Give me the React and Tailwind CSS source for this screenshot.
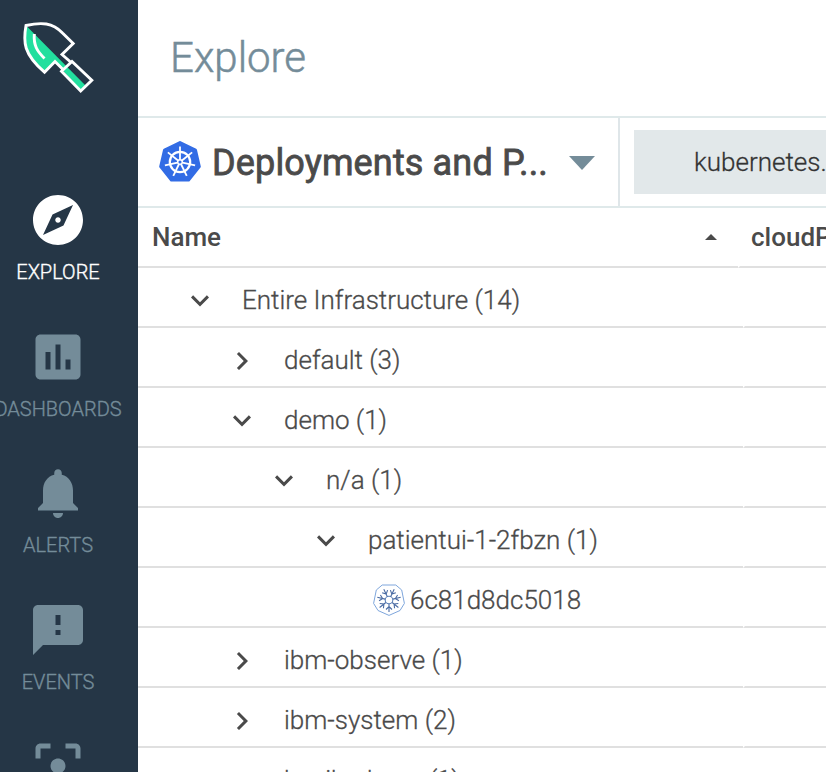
const nav = [
  {
    label: "EXPLORE",
    active: true,
    path: "M12 10.9c-.61 0-1.1.49-1.1 1.1s.49 1.1 1.1 1.1c.61 0 1.1-.49 1.1-1.1s-.49-1.1-1.1-1.1zM12 2C6.48 2 2 6.48 2 12s4.48 10 10 10 10-4.48 10-10S17.52 2 12 2zm2.19 12.19L6 18l3.81-8.19L18 6l-3.81 8.19z",
  },
  {
    label: "DASHBOARDS",
    path: "M19 3H5c-1.1 0-2 .9-2 2v14c0 1.1.9 2 2 2h14c1.1 0 2-.9 2-2V5c0-1.1-.9-2-2-2zM9 17H7v-7h2v7zm4 0h-2V7h2v10zm4 0h-2v-4h2v4z",
  },
  {
    label: "ALERTS",
    path: "M12 22c1.1 0 2-.9 2-2h-4c0 1.1.89 2 2 2zm6-6v-5c0-3.07-1.64-5.64-4.5-6.32V4c0-.83-.67-1.5-1.5-1.5s-1.5.67-1.5 1.5v.68C7.63 5.36 6 7.92 6 11v5l-2 2v1h16v-1l-2-2z",
  },
  {
    label: "EVENTS",
    path: "M20 2H4c-1.1 0-1.99.9-1.99 2L2 22l4-4h14c1.1 0 2-.9 2-2V4c0-1.1-.9-2-2-2zm-7 12h-2v-2h2v2zm0-4h-2V6h2v4z",
  },
  {
    path: "M5 15H3v4c0 1.1.9 2 2 2h4v-2H5v-4zM5 5h4V3H5c-1.1 0-2 .9-2 2v4h2V5zm14-2h-4v2h4v4h2V5c0-1.1-.9-2-2-2zm0 16h-4v2h4c1.1 0 2-.9 2-2v-4h-2v4zM12 9c-1.66 0-3 1.34-3 3s1.34 3 3 3 3-1.34 3-3-1.34-3-3-3z",
  },
];

const rows = [
  { text: "Entire Infrastructure (14)", pad: "pl-[44px]", open: true },
  { text: "default (3)", pad: "pl-[86px]" },
  { text: "demo (1)", pad: "pl-[86px]", open: true },
  { text: "n/a (1)", pad: "pl-[128px]", open: true },
  { text: "patientui-1-2fbzn (1)", pad: "pl-[170px]", open: true },
  { text: "6c81d8dc5018", pad: "pl-[235px]", leaf: true },
  { text: "ibm-observe (1)", pad: "pl-[86px]" },
  { text: "ibm-system (2)", pad: "pl-[86px]" },
  { text: "kopilo-demo (1)", pad: "pl-[86px] tracking-[-0.2px]" },
];

const spokes = [0, 1, 2, 3, 4, 5, 6].map((i) => (i * 360) / 7);

function Trowel() {
  return (
    <svg width="74" height="74" viewBox="21.500 20 74 74" fill="none" className="block">
      <path d="M27 26C23 43 24.500 54 45 72L55.500 62L63 70L81 90L86 85.500L27 26Z" fill="#22df9e" />
      <path
        d="M70.500 61.500L62.500 54.500L73.700 43.500L63 33C53 22.500 42 22 26.500 25.500C23.500 42 24 54 45 72.200L55.500 61.500L63.500 69.500M62 71.200L72.500 61.500L92.300 80.300L81.200 91Z"
        stroke="#fff"
        strokeWidth="2.900"
      />
      <path d="M34.800 34C34 45.500 37.500 51 45 58.500" stroke="#fff" strokeWidth="2.900" />
    </svg>
  );
}

function KubeWheel() {
  return (
    <svg width="42" height="42" viewBox="-21 -21 42 42" fill="none" className="block">
      <path
        d="M0-19.500L15.500-12L19.300 4.600L8.600 18H-8.600L-19.300 4.600L-15.500-12Z"
        fill="#326ce5"
        stroke="#326ce5"
        strokeWidth="3"
        strokeLinejoin="round"
      />
      <circle r="10.200" stroke="#fff" strokeWidth="2.200" />
      {spokes.map((a) => (
        <path key={a} d="M0-2.500V-15.500" stroke="#fff" strokeWidth="1.800" transform={`rotate(${a})`} />
      ))}
      <circle r="2.300" fill="#326ce5" stroke="#fff" strokeWidth="1.500" />
    </svg>
  );
}

function Snowflake() {
  return (
    <svg width="32" height="32" viewBox="-16 -16 32 32" fill="none" className="block">
      <path d="M-6.800-15H6.800L12.700-10L15.400 3.400L11 10.500L0 15.400L-11 10.500L-15.400 3.400L-12.700-10Z" stroke="#7ea6dc" />
      <circle r="3.800" stroke="#5a7fb8" strokeWidth="1.100" />
      {spokes.map((a) => (
        <path key={a} d="M0 4V12M-3 9.500L0 6.500L3 9.500" stroke="#4a6ba3" strokeWidth="1.100" transform={`rotate(${a})`} />
      ))}
    </svg>
  );
}

function Chevron({ open }) {
  return (
    <svg width="36" height="36" viewBox="0 0 24 24" className={open ? "block shrink-0" : "mt-[2px] block shrink-0"} fill="#4a4a4a">
      <path
        d={
          open
            ? "M7.410 8.840L12 13.420L16.590 8.840L18 10.250L12 16.250L6 10.250Z"
            : "M8.590 16.590L13.170 12L8.590 7.410L10 6L16 12L10 18Z"
        }
      />
    </svg>
  );
}

export default function App() {
  return (
    <div className="flex h-[772px] w-[826px] overflow-hidden bg-white font-['Roboto',sans-serif] text-[#4a4a4a]">
      <aside className="flex w-[138px] shrink-0 flex-col overflow-hidden bg-[#253646]">
        <div className="h-[190px] shrink-0 pt-[20px] pl-[21px]">
          <Trowel />
        </div>
        <nav className="flex w-[116px] flex-col">
          {nav.map((n, i) => (
            <div
              key={i}
              className={`flex h-[136.500px] shrink-0 flex-col items-center ${n.active ? "text-white" : "text-[#748c99]"}`}
            >
              <svg width="60" height="60" viewBox="0 0 24 24" fill="currentColor" className="block shrink-0">
                <path d={n.path} />
              </svg>
              {n.label && (
                <span className="mt-[8px] text-[20px] leading-[28px] font-light whitespace-nowrap [-webkit-text-stroke:0.35px_currentColor]">
                  {n.label}
                </span>
              )}
            </div>
          ))}
        </nav>
      </aside>
      <main className="flex min-w-0 flex-1 flex-col overflow-hidden">
        <header className="flex h-[118px] shrink-0 items-center border-b-2 border-[#dfe9ea] pl-[32px]">
          <h1 className="text-[42px] leading-[50px] font-light text-[#748c99] [-webkit-text-stroke:0.5px_currentColor]">
            Explore
          </h1>
        </header>
        <div className="flex h-[90px] shrink-0 border-b-2 border-[#dfe9ea]">
          <div className="flex w-[482px] shrink-0 items-center border-r-2 border-[#dfe6e9] pl-[21px]">
            <KubeWheel />
            <span className="mt-[2px] ml-[11px] w-[346px] text-[36px] leading-[44px] font-normal tracking-[0.15px] whitespace-nowrap [-webkit-text-stroke:0.8px_currentColor]">
              Deployments and P...
            </span>
            <svg width="26" height="14" viewBox="0 0 26 14" className="mt-[2px] ml-[11px] block shrink-0">
              <path d="M0 0H26L13 14Z" fill="#748c99" />
            </svg>
          </div>
          <div className="mt-[12px] ml-[14px] flex h-[64px] w-[260px] shrink-0 items-center bg-[#e2e8ea] pl-[60px]">
            <span className="text-[26px] font-light whitespace-nowrap text-[#333] [-webkit-text-stroke:0.3px_currentColor]">
              kubernetes.
            </span>
          </div>
        </div>
        <div className="flex h-[60px] shrink-0 text-[26px] font-medium">
          <div className="flex w-[600px] shrink-0 items-center justify-between border-b-2 border-[#e0e0e0] pr-[21px] pl-[14px]">
            <span>Name</span>
            <svg width="12" height="6" viewBox="0 0 12 6" className="block">
              <path d="M0 6L6 0L12 6Z" fill="#4a4a4a" />
            </svg>
          </div>
          <div className="flex w-[200px] shrink-0 items-center border-b-2 border-l-2 border-[#e0e0e0] border-l-transparent pl-[11px]">
            <span>cloudP</span>
          </div>
        </div>
        {rows.map((r) => (
          <div key={r.text} className="flex h-[60px] shrink-0 text-[26px] font-light [-webkit-text-stroke:0.3px_currentColor]">
            <div className={`flex w-[605px] shrink-0 items-center border-b-2 border-[#e0e0e0] pt-[6px] ${r.pad}`}>
              {r.leaf ? (
                <>
                  <Snowflake />
                  <span className="ml-[5px] whitespace-nowrap">{r.text}</span>
                </>
              ) : (
                <>
                  <Chevron open={r.open} />
                  <span className="ml-[24px] whitespace-nowrap">{r.text}</span>
                </>
              )}
            </div>
            <div className="w-[200px] shrink-0 border-b-2 border-l-2 border-[#e0e0e0] border-l-transparent" />
          </div>
        ))}
      </main>
    </div>
  );
}
